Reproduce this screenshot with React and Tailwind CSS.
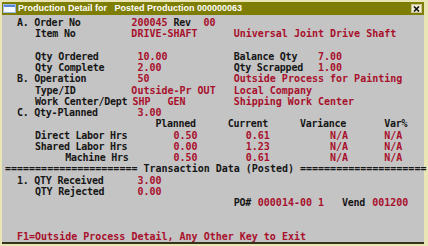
const L = 'text-[#161616] tracking-[-0.25px]';
const V = 'text-[#a8102c]';
const CW = 6.02;

// each line: list of [text, isValue, startCol]
const lines = [
  [['A. Order No', 0, 0], ['200045', 1, 19], ['Rev', 0, 26], ['00', 1, 31]],
  [['Item No', 0, 3], ['DRIVE-SHAFT', 1, 19], ['Universal Joint Drive Shaft', 1, 36]],
  [],
  [['Qty Ordered', 0, 3], ['10.00', 1, 20], ['Balance Qty', 0, 36], ['7.00', 1, 50]],
  [['Qty Complete', 0, 3], ['2.00', 1, 20], ['Qty Scrapped', 0, 36], ['1.00', 1, 50]],
  [['B. Operation', 0, 0], ['50', 1, 20], ['Outside Process for Painting', 1, 36]],
  [['Type/ID', 0, 3], ['Outside-Pr OUT', 1, 19], ['Local Company', 1, 36]],
  [['Work Center/Dept', 0, 3], ['SHP', 1, 19.2], ['GEN', 1, 25], ['Shipping Work Center', 1, 36]],
  [['C. Qty-Planned', 0, 0], ['3.00', 1, 20]],
  [['Planned', 0, 23], ['Current', 0, 35], ['Variance', 0, 47], ['Var%', 0, 61]],
  [['Direct Labor Hrs', 0, 3], ['0.50', 1, 26], ['0.61', 1, 38], ['N/A', 1, 52], ['N/A', 1, 61]],
  [['Shared Labor Hrs', 0, 3], ['0.00', 1, 26], ['1.23', 1, 38], ['N/A', 1, 52], ['N/A', 1, 61]],
  [['Machine Hrs', 0, 8], ['0.50', 1, 26], ['0.61', 1, 38], ['N/A', 1, 52], ['N/A', 1, 61]],
  'rule',
  [['1. QTY Received', 0, 0], ['3.00', 1, 20]],
  [['QTY Rejected', 0, 3], ['0.00', 1, 20]],
  [['PO#', 0, 36], ['000014-00 1', 1, 40], ['Vend', 0, 54], ['001200', 1, 59]],
  [],
  [],
  [['F1=Outside Process Detail, Any Other Key to Exit', 1, 0]],
];

function Line({ segs }) {
  const first = segs.length ? segs[0][2] : 0;
  return (
    <div className="h-[11.25px] flex whitespace-pre pl-[15px]">
      {first > 0 && <span className="shrink-0" style={{ width: first * CW }} />}
      {segs.map(([text, isValue, start], i) => {
        const next = segs[i + 1];
        return (
          <span
            key={i}
            className={(isValue ? V : L) + ' shrink-0'}
            style={next ? { width: (next[2] - start) * CW } : undefined}
          >
            {text}
          </span>
        );
      })}
    </div>
  );
}

export default function App() {
  return (
    <div className="w-[428px] h-[246px] bg-[#e9e5b4] pt-[2px] pl-[2px] pr-[4px] flex flex-col overflow-hidden">
      {/* Title bar */}
      <div className="h-[13px] bg-[#7e7d04] flex items-center pl-[1px] pr-[2px] shrink-0">
        <svg width="13" height="9" viewBox="0 0 13 9" className="shrink-0">
          <rect x="0.5" y="0.5" width="12" height="8" fill="#f4f8ff" stroke="#9cb8e8" />
          <rect x="1" y="1" width="11" height="2" fill="#5a86d6" />
        </svg>
        <span
          className="ml-[2px] text-white font-bold text-[9px] leading-none whitespace-pre"
          style={{ fontFamily: '"Liberation Sans", Arial, sans-serif' }}
        >
          {'Production Detail for   Posted Production 000000063'}
        </span>
        <div className="ml-auto w-[11px] h-[9px] bg-[#f1eed0] border border-[#c9c49a] flex items-center justify-center">
          <svg width="7" height="6" viewBox="0 0 7 6">
            <path d="M1 0.5 L6 5.5 M6 0.5 L1 5.5" stroke="#111" strokeWidth="1.6" />
          </svg>
        </div>
      </div>

      {/* Body */}
      <div
        className="flex-1 bg-[#c4c4c4] pt-[2px] text-[10px] leading-[11.25px] font-bold border-b-2 border-[#34341c]"
        style={{ fontFamily: '"DejaVu Sans Mono", monospace' }}
      >
        {lines.map((segs, i) =>
          segs === 'rule' ? (
            <div key={i} className="h-[11.25px] whitespace-pre pl-[3px] text-[#161616]">
              {'='.repeat(22) + ' Transaction Data (Posted) ' + '='.repeat(21)}
            </div>
          ) : (
            <Line key={i} segs={segs} />
          )
        )}
      </div>
      <div className="h-[2px] shrink-0" />
    </div>
  );
}
